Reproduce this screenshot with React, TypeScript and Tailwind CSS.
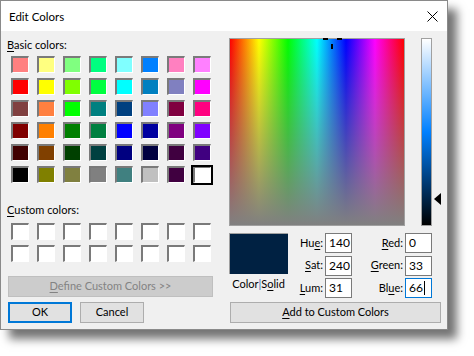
import React from "react";

const basic = [
  ["#FF8080", "#FFFF80", "#80FF80", "#00FF80", "#80FFFF", "#0080FF", "#FF80C0", "#FF80FF"],
  ["#FF0000", "#FFFF00", "#80FF00", "#00FF40", "#00FFFF", "#0080C0", "#8080C0", "#FF00FF"],
  ["#804040", "#FF8040", "#00FF00", "#008080", "#004080", "#8080FF", "#800040", "#FF0080"],
  ["#800000", "#FF8000", "#008000", "#008040", "#0000FF", "#0000A0", "#800080", "#8000FF"],
  ["#400000", "#804000", "#004000", "#004040", "#000080", "#000040", "#400040", "#400080"],
  ["#000000", "#808000", "#808040", "#808080", "#408080", "#C0C0C0", "#400040", "#FFFFFF"],
];

function Swatch({ color, selected }: { color: string; selected?: boolean }) {
  const inner = (
    <div className="w-[18px] h-[17px] border-t-2 border-l-2 border-[#7a7a7a] border-r border-b border-r-white border-b-white box-border">
      <div className="w-full h-full" style={{ backgroundColor: color }} />
    </div>
  );
  if (!selected) return inner;
  return (
    <div className="relative w-[18px] h-[17px]">
      {inner}
      <div className="absolute left-[-2px] top-[-1px] w-[22px] h-[20px] border-2 border-black" />
    </div>
  );
}

export default function App() {
  const font = { fontFamily: "Lato, 'Liberation Sans', sans-serif" };
  const lbl = (pre: string, ul: string, post: string) => (
    <span>
      {pre}
      <span className="underline underline-offset-[2px]">{ul}</span>
      {post}
    </span>
  );
  const box = (v: string, focused?: boolean) => (
    <div
      className={
        "w-[27px] h-[20px] bg-white box-border border pl-[3px] leading-[18px] text-[12px] text-black flex items-center " +
        (focused ? "border-[#0078d7]" : "border-[#7a7a7a]")
      }
    >
      {v}
      {focused && <span className="inline-block w-[1px] h-[14px] bg-black ml-[1px]" />}
    </div>
  );
  return (
    <div className="w-[474px] h-[356px] bg-white text-[11px] text-black" style={font}>
      <div className="w-[448px] h-[330px] bg-[#f0f0f0] border border-[#8a8a8a] box-border flex flex-col shadow-[9px_9px_9px_rgba(0,0,0,0.55)]">
        {/* title bar */}
        <div className="h-[30px] bg-white flex items-center justify-between pl-[8px] pr-[9px]">
          <span className="text-[11.5px] leading-[15px] mt-[1px]">Edit Colors</span>
          <svg width="11" height="11" viewBox="0 0 11 11">
            <path d="M0.5 0.5 L10.5 10.5 M10.5 0.5 L0.5 10.5" stroke="#000" strokeWidth="1" />
          </svg>
        </div>
        {/* body */}
        <div className="flex flex-1">
          {/* left */}
          <div className="w-[228px] pl-[6px] pt-[6px] flex flex-col">
            <div className="leading-[15px]">{lbl("", "B", "asic colors:")}</div>
            <div className="mt-[4px] ml-[4px] grid grid-cols-[repeat(8,18px)] gap-x-[8px] gap-y-[5px]">
              {basic.flatMap((row, r) =>
                row.map((c, i) => <Swatch key={r + "-" + i} color={c} selected={r === 5 && i === 7} />)
              )}
            </div>
            <div className="mt-[19px] leading-[15px]">{lbl("", "C", "ustom colors:")}</div>
            <div className="mt-[6px] ml-[4px] grid grid-cols-[repeat(8,18px)] gap-x-[8px] gap-y-[5px]">
              {Array.from({ length: 16 }).map((_, i) => (
                <Swatch key={i} color="#FFFFFF" />
              ))}
            </div>
            <div className="mt-[14px] ml-[1px] w-[205px] h-[21px] bg-[#cccccc] border border-[#bfbfbf] box-border flex items-center justify-center text-[#838383]">
              {lbl("", "D", "efine Custom Colors >>")}
            </div>
            <div className="mt-[5px] ml-[1px] flex gap-[8px]">
              <div className="w-[64px] h-[21px] bg-[#e1e1e1] border-2 border-[#0078d7] box-border flex items-center justify-center">
                OK
              </div>
              <div className="w-[64px] h-[21px] bg-[#e1e1e1] border border-[#adadad] box-border flex items-center justify-center">
                Cancel
              </div>
            </div>
          </div>
          {/* right */}
          <div className="flex-1 pt-[7px] flex flex-col">
            <div className="flex">
              <div className="relative w-[176px] h-[188px] border border-[#a0a0a0] box-border bg-[linear-gradient(to_bottom,rgba(128,128,128,0),#808080),linear-gradient(to_right,#ff0000,#ffff00,#00ff00,#00ffff,#0000ff,#ff00ff,#ff0000)]">
                <div className="absolute left-[93px] top-[-1px] w-[5px] h-[2px] bg-black" />
                <div className="absolute left-[107px] top-[-1px] w-[5px] h-[2px] bg-black" />
                <div className="absolute left-[101px] top-[5px] w-[2px] h-[5px] bg-black" />
              </div>
              <div className="relative ml-[16px] w-[11px] h-[188px] border border-[#a0a0a0] box-border bg-[linear-gradient(to_bottom,#ffffff,#0080ff_50%,#000000)]">
                <div className="absolute left-[12px] top-[154px] w-0 h-0 border-y-[6.5px] border-y-transparent border-r-[7px] border-r-black" />
              </div>
            </div>
            <div className="mt-[7px] flex">
              <div className="flex flex-col items-center w-[59px]">
                <div className="w-[59px] h-[41px] bg-[#002142] border-t border-l border-[#a0a0a0] box-border" />
                <div className="mt-[2px] leading-[15px]">
                  Color<span className="text-[#3b6fb5]">|</span>S<span className="underline underline-offset-[2px]">o</span>lid
                </div>
              </div>
              <div className="flex flex-col gap-[2.5px]">
                {[
                  [lbl("Hu", "e", ":"), "140", lbl("", "R", "ed:"), "0", false],
                  [lbl("", "S", "at:"), "240", lbl("", "G", "reen:"), "33", false],
                  [lbl("", "L", "um:"), "31", lbl("Bl", "u", "e:"), "66", true],
                ].map((row, i) => (
                  <div key={i} className="flex items-center">
                    <div className="w-[35px] text-right">{row[0] as any}</div>
                    <div className="ml-[2px]">{box(row[1] as string)}</div>
                    <div className="w-[51px] text-right">{row[2] as any}</div>
                    <div className="ml-[2px]">{box(row[3] as string, row[4] as boolean)}</div>
                  </div>
                ))}
              </div>
            </div>
            <div className="mt-[4px] ml-[1px] w-[211px] h-[21px] bg-[#e1e1e1] border border-[#adadad] box-border flex items-center justify-center">
              {lbl("", "A", "dd to Custom Colors")}
            </div>
          </div>
        </div>
      </div>
    </div>
  );
}
